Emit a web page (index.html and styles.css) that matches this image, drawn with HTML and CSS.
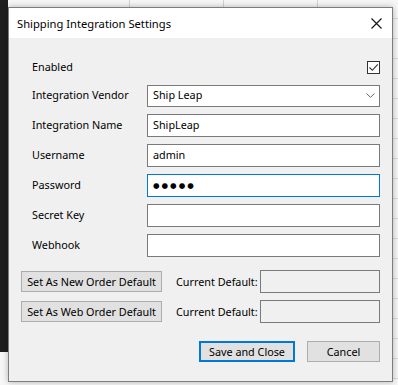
FILE: index.html
```html
<!DOCTYPE html>
<html>
<head>
<meta charset="utf-8">
<link rel="stylesheet" href="styles.css">
</head>
<body>
<div class="dialog">
  <div class="titlebar">
    <span class="title">Shipping Integration Settings</span>
    <span class="close"><svg width="11" height="11" viewBox="0 0 11 11"><path d="M0.5 0.5 L10.5 10.5 M10.5 0.5 L0.5 10.5" stroke="#111" stroke-width="1.1" fill="none"/></svg></span>
  </div>
  <div class="body">
    <div class="form">
      <div class="row row-check">
        <span class="label">Enabled</span>
        <span class="checkbox"><svg width="11" height="11" viewBox="0 0 11 11"><path d="M1.5 5.5 L4.3 8.3 L9.8 2.3" stroke="#333" stroke-width="1.1" fill="none"/></svg></span>
      </div>
      <div class="row">
        <span class="label">Integration Vendor</span>
        <div class="field select"><span>Ship Leap</span><svg width="9" height="5" viewBox="0 0 9 5"><path d="M0.5 0.5 L4.5 4.3 L8.5 0.5" stroke="#666" stroke-width="1" fill="none"/></svg></div>
      </div>
      <div class="row">
        <span class="label">Integration Name</span>
        <div class="field">ShipLeap</div>
      </div>
      <div class="row">
        <span class="label">Username</span>
        <div class="field">admin</div>
      </div>
      <div class="row">
        <span class="label">Password</span>
        <div class="field focused"><span class="dots">●●●●●</span></div>
      </div>
      <div class="row">
        <span class="label">Secret Key</span>
        <div class="field"></div>
      </div>
      <div class="row">
        <span class="label">Webhook</span>
        <div class="field"></div>
      </div>
    </div>
    <div class="defaults">
      <div class="drow">
        <button class="btn btn-wide">Set As New Order Default</button>
        <span class="cd-label">Current Default:</span>
        <div class="field readonly"></div>
      </div>
      <div class="drow">
        <button class="btn btn-wide">Set As Web Order Default</button>
        <span class="cd-label">Current Default:</span>
        <div class="field readonly"></div>
      </div>
    </div>
    <div class="footer">
      <button class="btn btn-save">Save and Close</button>
      <button class="btn btn-cancel">Cancel</button>
    </div>
  </div>
</div>
</body>
</html>
```
FILE: styles.css
```css
html, body {
  margin: 0;
  padding: 0;
}
body {
  width: 398px;
  height: 385px;
  overflow: hidden;
  font-family: "Noto Sans", "DejaVu Sans", sans-serif;
  font-size: 10.8px;
  color: #000;
  background-color: #f6f6f6;
  background-image:
    linear-gradient(to bottom, #1e1e1e 0, #1e1e1e 352px, transparent 352px),
    repeating-linear-gradient(to right, #d2d2d2 0, #d2d2d2 1px, transparent 1px, transparent 94px),
    repeating-linear-gradient(to bottom, transparent 0, transparent 18px, #dadada 18px, #dadada 19px, transparent 19px, transparent 20px);
  background-size: 8px 385px, 300px 7px, 6px 385px;
  background-position: 0 0, 129px 0, 392px 0;
  background-repeat: no-repeat, no-repeat, no-repeat;
  display: flex;
  align-items: flex-start;
}
.dialog {
  margin: 7px 0 0 8px;
  width: 385px;
  height: 375px;
  box-sizing: border-box;
  border: 1px solid #7d7d7d;
  background: #f0f0f0;
  box-shadow: 0 0 6px rgba(0, 0, 0, 0.28);
  display: flex;
  flex-direction: column;
}
.titlebar {
  height: 30px;
  background: #fff;
  display: flex;
  align-items: center;
  justify-content: space-between;
  padding: 0 10px 0 8px;
  flex: none;
}
.title {
  font-size: 11.2px;
  color: #000;
}
.close {
  display: flex;
  margin-top: 1px;
}
.body {
  flex: 1;
  padding: 19px 12px 0 12px;
  display: flex;
  flex-direction: column;
}
.form {
  padding-left: 11px;
  display: flex;
  flex-direction: column;
  gap: 7px;
}
.row {
  display: grid;
  grid-template-columns: 115px 1fr;
  align-items: center;
  height: 23px;
}
.row-check {
  height: 20px;
}
.label {
  white-space: nowrap;
  padding-bottom: 2px;
}
.checkbox {
  justify-self: end;
  width: 13px;
  height: 13px;
  box-sizing: border-box;
  border: 1px solid #333;
  background: #fff;
  display: flex;
  align-items: center;
  justify-content: center;
}
.field {
  height: 23px;
  box-sizing: border-box;
  border: 1px solid #7a7a7a;
  background: #fff;
  padding: 0 5px 2px 5px;
  display: flex;
  align-items: center;
  white-space: nowrap;
}
.select {
  height: 22px;
  justify-content: space-between;
  padding-right: 4px;
}
.select svg {
  margin-top: 2px;
}
.focused {
  border-color: #0078d7;
  padding-bottom: 0;
}
.dots {
  font-family: "DejaVu Sans", sans-serif;
  font-size: 7.5px;
  letter-spacing: 2px;
}
.defaults {
  margin-top: 13px;
  display: flex;
  flex-direction: column;
  gap: 7px;
}
.drow {
  height: 23px;
  display: flex;
  align-items: center;
}
.btn {
  font-family: "Noto Sans", "DejaVu Sans", sans-serif;
  font-size: 10.8px;
  color: #000;
  height: 21px;
  box-sizing: border-box;
  background: #e1e1e1;
  border: 1px solid #adadad;
  padding: 0 0 1px 0;
  margin: 0;
  display: flex;
  align-items: center;
  justify-content: center;
  white-space: nowrap;
}
.btn-wide {
  width: 141px;
}
.cd-label {
  margin-left: 14px;
  white-space: nowrap;
}
.readonly {
  margin-left: auto;
  width: 120px;
  background: #f0f0f0;
}
.footer {
  margin-top: 18px;
  display: flex;
  justify-content: flex-end;
  gap: 12px;
}
.btn-save {
  width: 96px;
  border: 2px solid #0078d7;
}
.btn-cancel {
  width: 73px;
}
```
